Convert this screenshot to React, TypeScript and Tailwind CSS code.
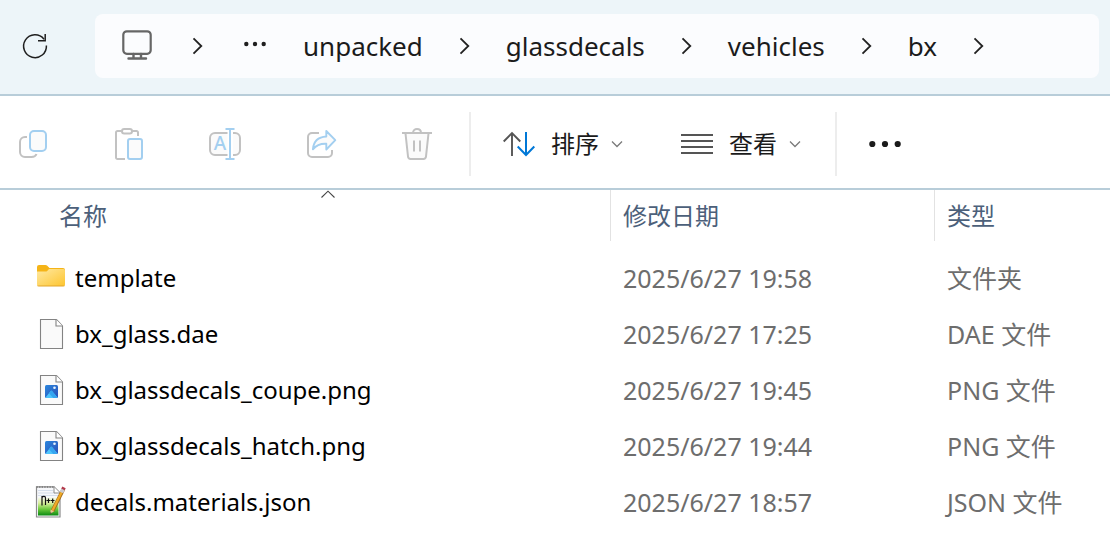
import type { ReactNode } from 'react';

type FileKind = 'folder' | 'blank' | 'image' | 'notepad';

type FileRow = {
  name: string;
  kind: FileKind;
  modified: string;
  type: string;
};

const PATH = ['unpacked', 'glassdecals', 'vehicles', 'bx'];

const FILES: FileRow[] = [
  { name: 'template', kind: 'folder', modified: '2025/6/27 19:58', type: '文件夹' },
  { name: 'bx_glass.dae', kind: 'blank', modified: '2025/6/27 17:25', type: 'DAE 文件' },
  { name: 'bx_glassdecals_coupe.png', kind: 'image', modified: '2025/6/27 19:45', type: 'PNG 文件' },
  { name: 'bx_glassdecals_hatch.png', kind: 'image', modified: '2025/6/27 19:44', type: 'PNG 文件' },
  { name: 'decals.materials.json', kind: 'notepad', modified: '2025/6/27 18:57', type: 'JSON 文件' },
];

const GRAY = '#c2c2c2';
const BLUE = '#a3cff0';

function Icon({ children }: { children: ReactNode }) {
  return (
    <svg viewBox="0 0 32 32" className="size-8 shrink-0" fill="none" aria-hidden="true">
      {children}
    </svg>
  );
}

function PathChevron() {
  return (
    <svg viewBox="0 0 12 20" className="h-5 w-3 shrink-0" fill="none" aria-hidden="true">
      <path d="M1.5 2.3 9.3 10l-7.8 7.7" stroke="#222" strokeWidth="1.8" />
    </svg>
  );
}

function DropChevron() {
  return (
    <svg viewBox="0 0 12 8" className="h-2 w-3 shrink-0" fill="none" aria-hidden="true">
      <path d="M1 1.5 6 6.500l5-5" stroke="#7a7a7a" strokeWidth="1.3" />
    </svg>
  );
}

function CopyIcon() {
  return (
    <Icon>
      <path d="M10 9H8a5 5 0 0 0-5 5v10a5 5 0 0 0 5 5h6.500c2.500 0 4.300-1 5-3" stroke={GRAY} strokeWidth="2" />
      <rect x="13" y="3" width="16" height="20" rx="4" fill="#fbfbfb" stroke={BLUE} strokeWidth="2" />
    </Icon>
  );
}

function PasteIcon() {
  return (
    <Icon>
      <path d="M9 3H4.500A1.500 1.500 0 0 0 3 4.500v25A1.500 1.500 0 0 0 4.500 31H12M19 3h4.500A1.500 1.500 0 0 1 25 4.500V8" stroke={GRAY} strokeWidth="2" />
      <rect x="9" y="1" width="10" height="4.500" rx="2.200" fill="#fff" stroke={GRAY} strokeWidth="2" />
      <rect x="15" y="11" width="14" height="20" rx="2" fill="#fbfbfb" stroke={BLUE} strokeWidth="2" />
    </Icon>
  );
}

function RenameIcon() {
  return (
    <Icon>
      <path d="M18.500 5H6a5 5 0 0 0-5 5v12a5 5 0 0 0 5 5h12.500M24 5h2a5 5 0 0 1 5 5v12a5 5 0 0 1-5 5h-2" fill="#fbfbfb" stroke={GRAY} strokeWidth="2" />
      <path d="M21 1v30M16.500 1h9M16.500 31h9" stroke={BLUE} strokeWidth="2" />
      <text x="11" y="22" textAnchor="middle" fontSize="19" fontWeight="500" fill={BLUE}>A</text>
    </Icon>
  );
}

function ShareIcon() {
  return (
    <Icon>
      <path d="M14 5H7a4 4 0 0 0-4 4v16a4 4 0 0 0 4 4h16a4 4 0 0 0 4-4v-3" stroke={GRAY} strokeWidth="2" />
      <path d="M21.300 3v5.500C13 9 8.500 13.500 7.900 21.300 11.500 17 15.500 15.500 21.300 15.800V21.500L30.300 12.200Z" fill="#fbfbfb" stroke={BLUE} strokeWidth="1.900" strokeLinejoin="round" />
    </Icon>
  );
}

function DeleteIcon() {
  return (
    <Icon>
      <path d="M4.500 5.500 7 28.500A2.500 2.500 0 0 0 9.500 31h13a2.500 2.500 0 0 0 2.500-2.500L27.500 5.500" fill="#fbfbfb" stroke={GRAY} strokeWidth="2" />
      <path d="M1 5h30M12 5c0-5.300 8-5.300 8 0M13 12.500v11M19 12.500v11" stroke={GRAY} strokeWidth="2" />
    </Icon>
  );
}

function SortIcon() {
  return (
    <Icon>
      <path d="M9 28V5M.700 13.500 9 5l8.300 8.500" stroke="#555" strokeWidth="1.900" />
      <path d="M23 4v23M14.700 18.500 23 27l8.300-8.500" stroke="#0078d7" strokeWidth="2" />
    </Icon>
  );
}

function ViewIcon() {
  return (
    <Icon>
      <path d="M0 7h32M0 13h32M0 19h32M0 25h32" stroke="#555" strokeWidth="1.900" />
    </Icon>
  );
}

function FileIcon({ kind }: { kind: FileKind }) {
  if (kind === 'folder') {
    return (
      <Icon>
        <defs>
          <linearGradient id="folder" x1="0" y1="0" x2="1" y2="1">
            <stop offset="0" stopColor="#ffe9a3" />
            <stop offset="1" stopColor="#fdc52f" />
          </linearGradient>
        </defs>
        <path d="M2 5a2 2 0 0 1 2-2h6.500c.600 0 1 .200 1.500.600L14.500 6H28a2 2 0 0 1 2 2v6H2Z" fill="#f5b417" />
        <path d="M2 9.500h8.500c.700 0 1.200-.200 1.700-.600L14 7h14.500A1.500 1.500 0 0 1 30 8.500v14a1.500 1.500 0 0 1-1.500 1.500h-25A1.500 1.500 0 0 1 2 22.500Z" fill="url(#folder)" />
        <path d="M2.500 23.800c.300.200.600.200 1 .200h25c.400 0 .700 0 1-.200" stroke="#e2a52b" strokeWidth="1" />
      </Icon>
    );
  }
  if (kind === 'notepad') {
    return (
      <Icon>
        <defs>
          <linearGradient id="notepad" x1="0" y1="0" x2="0" y2="1">
            <stop offset="0" stopColor="#f4f8ec" />
            <stop offset=".3" stopColor="#dcf0a0" />
            <stop offset=".65" stopColor="#6cc83c" />
            <stop offset="1" stopColor="#0a8a12" />
          </linearGradient>
        </defs>
        <path d="M1.500 .800H19l6 6V31h-23.500Z" fill="#f7f8fb" stroke="#8b8b8b" strokeWidth="1.200" />
        <path d="M1.500 1H20" stroke="#777" strokeWidth="1.400" strokeDasharray="1.300 1.300" />
        <path d="M3 4.500h15M3 7h17M3 9.500h20" stroke="#c5d3e4" strokeWidth=".7" />
        <path d="M3 11.500h20.500v18H3Z" fill="url(#notepad)" />
        <path d="M19 1v6h6" fill="#fff" stroke="#8b8b8b" strokeWidth="1" />
        <path d="M7 19.500V10M7 11.500c.800-1.500 3.500-1.700 3.500.500V19M11.500 14.500h4M13.500 12.500v4.500M16 14.500h3.500M17.700 12.500v4.500" stroke="#111" strokeWidth="1.200" />
        <path d="M17.200 25.500 28.500 3" stroke="#a06a1c" strokeWidth="3.800" />
        <path d="M17.500 24.500 28 3.500" stroke="#f0ab26" strokeWidth="2.400" />
        <path d="M26.500 6.500 28.200 3" stroke="#c9c9cf" strokeWidth="3.800" />
        <path d="M28 3.300 29 1.300" stroke="#b33a4c" strokeWidth="3.800" />
        <path d="m15.600 23.500-.300 4.500 3.700-2.800Z" fill="#ecc593" />
        <path d="m15.400 26.300-.2 2 1.600-1.200Z" fill="#333" />
      </Icon>
    );
  }
  return (
    <Icon>
      <path d="M5.500 1.500h16l6 6.500v22.500h-22Z" fill="#fafafa" stroke="#838383" strokeWidth="1.100" />
      <path d="M21 1.500v6.500h6.500" fill="#fff" stroke="#838383" strokeWidth="1.100" />
      {kind === 'image' && (
        <>
          <defs>
            <linearGradient id="photo" x1="0" y1="0" x2="1" y2="1">
              <stop offset="0" stopColor="#2a86dd" />
              <stop offset="1" stopColor="#2b50b8" />
            </linearGradient>
          </defs>
          <rect x="10" y="11" width="13" height="13" rx="1.500" fill="url(#photo)" />
          <path d="m10.500 23.500 5-6.200c.500-.600 1.200-.600 1.700 0l5.300 6.200c-.400.400-.700.500-1.200.500h-9.600c-.500 0-.900-.200-1.200-.500Z" fill="#4dc4fb" />
          <path d="m14 19.200 1.500-1.900c.500-.600 1.200-.600 1.700 0l5.300 6.200c-.400.400-.700.500-1.200.500h-3Z" fill="#35a5f0" />
          <circle cx="19.500" cy="13.800" r="1.300" fill="#e6f4ff" />
        </>
      )}
    </Icon>
  );
}

export default function App() {
  return (
    <div className="min-h-screen bg-white font-['Noto_Sans','Noto_Sans_CJK_SC',sans-serif] text-[24px] leading-8 text-[#1b1b1b]">
      {/* Address bar */}
      <header className="flex items-center border-b-2 border-[#b8cdd9] bg-[#edf5f9] pt-3.5 pr-[11px] pb-4 pl-[19px]">
        <button type="button" aria-label="刷新">
          <Icon>
            <path d="M27.400 15.500A11.400 11.400 0 1 1 25 9.200" stroke="#1f1f1f" strokeWidth="1.500" />
            <path d="M26.200 4v6.700H19" stroke="#1f1f1f" strokeWidth="1.500" />
          </Icon>
        </button>
        <nav
          aria-label="路径"
          className="ml-11 flex h-16 min-w-0 flex-1 items-center gap-[35px] overflow-hidden rounded-lg bg-[#fbfcfe] pl-[26px] text-[26px] whitespace-nowrap"
        >
          <button type="button" aria-label="此电脑" className="w-9 shrink-0">
            <Icon>
              <rect x="2.300" y="1.300" width="27.400" height="22.500" rx="3.500" stroke="#666" strokeWidth="2.200" />
              <path d="M12.500 24v4.500M20 24v4.500M7.500 28.500H25" stroke="#666" strokeWidth="2.400" strokeLinecap="round" />
            </Icon>
          </button>
          <PathChevron />
          <button type="button" aria-label="更多路径" className="shrink-0">
            <svg viewBox="0 0 29 32" className="h-8 w-[29px]" fill="#1f1f1f" aria-hidden="true">
              <circle cx="7.300" cy="14" r="2.200" />
              <circle cx="16" cy="14" r="2.200" />
              <circle cx="24.700" cy="14" r="2.200" />
            </svg>
          </button>
          {PATH.map((part) => (
            <div key={part} className="flex items-center gap-9">
              <a href="#">{part}</a>
              <PathChevron />
            </div>
          ))}
        </nav>
      </header>

      {/* Command bar */}
      <div role="toolbar" className="flex border-b-2 border-[#b8cdd9] pt-4 pb-3 pl-[17px]">
        <div className="flex h-16 items-center gap-16 border-r-2 border-[#ededed] pr-9">
          <button type="button" aria-label="复制" disabled><CopyIcon /></button>
          <button type="button" aria-label="粘贴" disabled><PasteIcon /></button>
          <button type="button" aria-label="重命名" disabled><RenameIcon /></button>
          <button type="button" aria-label="共享" disabled><ShareIcon /></button>
          <button type="button" aria-label="删除" disabled><DeleteIcon /></button>
        </div>
        <div className="flex h-16 items-center gap-[58px] border-r-2 border-[#ededed] pr-[34px] pl-8 whitespace-nowrap">
          <button type="button" className="flex items-center">
            <SortIcon />
            <span className="mr-3 ml-4">排序</span>
            <DropChevron />
          </button>
          <button type="button" className="flex items-center">
            <ViewIcon />
            <span className="mr-3 ml-4">查看</span>
            <DropChevron />
          </button>
        </div>
        <button type="button" aria-label="查看更多" className="ml-8">
          <svg viewBox="0 0 32 32" className="size-8" fill="#1b1b1b" aria-hidden="true">
            <circle cx="3.300" cy="16" r="3.100" />
            <circle cx="16" cy="16" r="3.100" />
            <circle cx="28.700" cy="16" r="3.100" />
          </svg>
        </button>
      </div>

      {/* File list */}
      <table className="w-full table-fixed text-left">
        <colgroup>
          <col className="w-[610px]" />
          <col className="w-[324px]" />
          <col />
        </colgroup>
        <thead className="text-[#4c607a]">
          <tr>
            <th className="p-0 pb-[9px] pl-[46px] font-normal" aria-sort="ascending">
              <div className="relative flex h-[51px] items-center pl-[13px]">
                <svg viewBox="0 0 14 8" className="absolute top-0 left-1/2 h-2 w-3.5 -translate-x-1/2" fill="none" aria-hidden="true">
                  <path d="M.500 7.500 7 1.200l6.500 6.300" stroke="#444" strokeWidth="1.100" />
                </svg>
                名称
              </div>
            </th>
            <th className="p-0 pb-[9px] font-normal">
              <div className="flex h-[51px] items-center border-l border-[#e2e2e2] pl-3">修改日期</div>
            </th>
            <th className="p-0 pb-[9px] font-normal">
              <div className="flex h-[51px] items-center border-l border-[#e2e2e2] pl-3">类型</div>
            </th>
          </tr>
        </thead>
        <tbody className="whitespace-nowrap">
          {FILES.map((file) => (
            <tr key={file.name} className="h-14">
              <td className="p-0 pl-[35px]">
                <div className="flex items-center gap-2 text-black">
                  <FileIcon kind={file.kind} />
                  {file.name}
                </div>
              </td>
              <td className="p-0 pl-[13px] text-[25px] text-[#6d6d6d]">{file.modified}</td>
              <td className="p-0 pl-[13px] text-[25px] text-[#6d6d6d]">{file.type}</td>
            </tr>
          ))}
        </tbody>
      </table>
    </div>
  );
}
